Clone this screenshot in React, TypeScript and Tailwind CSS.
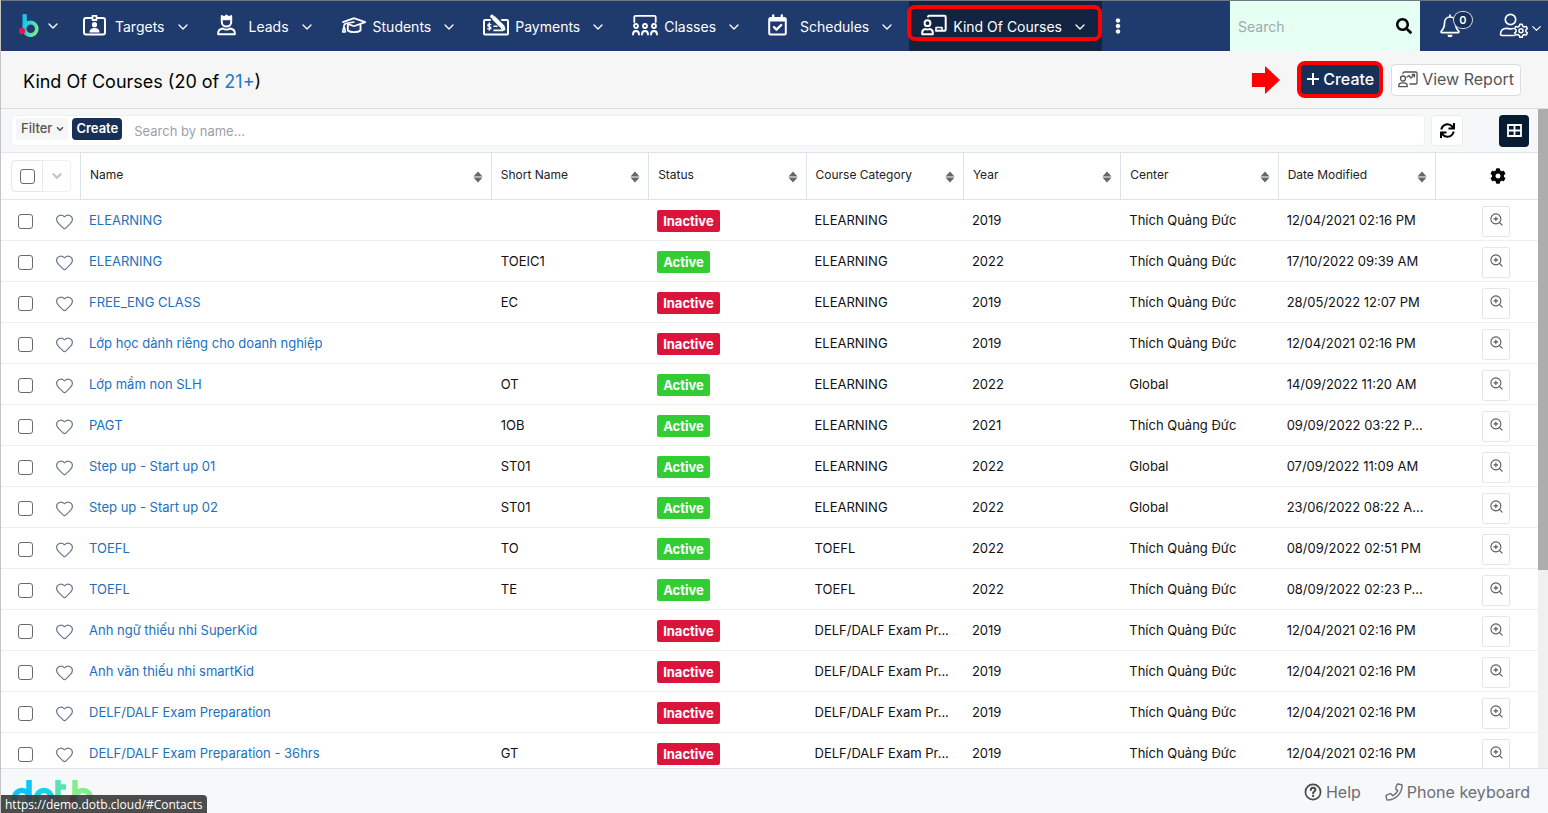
import React from "react";
import { ChevronDown, Heart, ZoomIn } from "lucide-react";
import { FaCog, FaEllipsisV, FaSearch, FaSync } from "react-icons/fa";

type Course = {
  name: string;
  short: string;
  active: boolean;
  category: string;
  year: string;
  center: string;
  modified: string;
};

const TQD = "Thích Quảng Đức";

const courses: Course[] = [
  { name: "ELEARNING", short: "", active: false, category: "ELEARNING", year: "2019", center: TQD, modified: "12/04/2021 02:16 PM" },
  { name: "ELEARNING", short: "TOEIC1", active: true, category: "ELEARNING", year: "2022", center: TQD, modified: "17/10/2022 09:39 AM" },
  { name: "FREE_ENG CLASS", short: "EC", active: false, category: "ELEARNING", year: "2019", center: TQD, modified: "28/05/2022 12:07 PM" },
  { name: "Lớp học dành riêng cho doanh nghiệp", short: "", active: false, category: "ELEARNING", year: "2019", center: TQD, modified: "12/04/2021 02:16 PM" },
  { name: "Lớp mầm non SLH", short: "OT", active: true, category: "ELEARNING", year: "2022", center: "Global", modified: "14/09/2022 11:20 AM" },
  { name: "PAGT", short: "1OB", active: true, category: "ELEARNING", year: "2021", center: TQD, modified: "09/09/2022 03:22 P..." },
  { name: "Step up - Start up 01", short: "ST01", active: true, category: "ELEARNING", year: "2022", center: "Global", modified: "07/09/2022 11:09 AM" },
  { name: "Step up - Start up 02", short: "ST01", active: true, category: "ELEARNING", year: "2022", center: "Global", modified: "23/06/2022 08:22 A..." },
  { name: "TOEFL", short: "TO", active: true, category: "TOEFL", year: "2022", center: TQD, modified: "08/09/2022 02:51 PM" },
  { name: "TOEFL", short: "TE", active: true, category: "TOEFL", year: "2022", center: TQD, modified: "08/09/2022 02:23 P..." },
  { name: "Anh ngữ thiếu nhi SuperKid", short: "", active: false, category: "DELF/DALF Exam Pr...", year: "2019", center: TQD, modified: "12/04/2021 02:16 PM" },
  { name: "Anh văn thiếu nhi smartKid", short: "", active: false, category: "DELF/DALF Exam Pr...", year: "2019", center: TQD, modified: "12/04/2021 02:16 PM" },
  { name: "DELF/DALF Exam Preparation", short: "", active: false, category: "DELF/DALF Exam Pr...", year: "2019", center: TQD, modified: "12/04/2021 02:16 PM" },
  { name: "DELF/DALF Exam Preparation - 36hrs", short: "GT", active: false, category: "DELF/DALF Exam Pr...", year: "2019", center: TQD, modified: "12/04/2021 02:16 PM" },
];

const columns = ["Name", "Short Name", "Status", "Course Category", "Year", "Center", "Date Modified"];

function NavIcon({ children }: { children: React.ReactNode }) {
  return (
    <svg
      viewBox="0 0 26 22"
      className="h-[22px] w-[26px] shrink-0"
      fill="none"
      stroke="white"
      strokeWidth="2"
      strokeLinecap="round"
      strokeLinejoin="round"
      aria-hidden="true"
    >
      {children}
    </svg>
  );
}

const TargetsIcon = (
  <NavIcon>
    <path d="M8.5 4H3a2 2 0 0 0-2 2v12.500a2 2 0 0 0 2 2h17a2 2 0 0 0 2-2V6a2 2 0 0 0-2-2h-5.500" />
    <path d="M9.500 1.800h4v4.200h-4z" strokeWidth="1.800" />
    <circle cx="11.500" cy="10.700" r="2.600" fill="white" stroke="none" />
    <path d="M6.500 18.500c0-3 1.500-4.500 5-4.500s5 1.500 5 4.500z" fill="white" stroke="none" />
  </NavIcon>
);

const LeadsIcon = (
  <NavIcon>
    <path d="M4.800 2v6c0 2.600 2 4.600 4.700 4.600s4.700-2 4.700-4.600V2L11.800 3.400 9.500 1.500 7.200 3.400z" />
    <path d="M5 2.500h9v3.700H5z" fill="white" stroke="none" />
    <path d="M5.800 14.500C3 15 1.200 16.500 1.200 19v1.300h16.600V19c0-2.500-1.800-4-4.600-4.500-2 1.400-5.400 1.400-7.400 0z" />
  </NavIcon>
);

const StudentsIcon = (
  <NavIcon>
    <path d="M2 8.200 12.500 4.300c.4-.1.700-.1 1 0L24.300 8.200 13.500 12c-.3.100-.6.100-1 0L7 10.200" strokeWidth="1.800" />
    <path d="M6.800 11v5.500c2.500 2.200 10.200 2.200 12.700 0v-5.500" strokeWidth="1.900" />
    <path d="M13 8 5 9.500C3.300 10 2.800 11.500 2.800 13l-1.200 5h2.800l-1-5" strokeWidth="1.500" />
  </NavIcon>
);

const PaymentsIcon = (
  <NavIcon>
    <path d="M7 6H2a1 1 0 0 0-1 1v12.500a1 1 0 0 0 1 1h22a1 1 0 0 0 1-1V7a1 1 0 0 0-1-1h-5" />
    <path d="m10.200 3.400 9.800 9.800" strokeWidth="4.200" strokeLinecap="butt" />
    <path d="m18.500 15 3.600 1-1-3.600z" fill="white" strokeWidth="1" />
    <circle cx="9" cy="2.400" r="1.800" fill="white" stroke="none" />
    <path d="M7.800 10.600c-.6-.6-3-.7-3 .8 0 1.600 3.200.9 3.200 2.600 0 1.500-2.600 1.400-3.400.6M6.300 8.800v7.400" strokeWidth="1.300" />
    <path d="M11 12.200h3M11 16.400h9" strokeWidth="1.600" />
  </NavIcon>
);

const ClassesIcon = (
  <NavIcon>
    <path d="M2.300 8V3a1.200 1.200 0 0 1 1.200-1.200h19A1.200 1.200 0 0 1 23.700 3v5" strokeWidth="1.800" />
    <circle cx="4" cy="12" r="2" strokeWidth="1.800" />
    <circle cx="13" cy="12" r="2" strokeWidth="1.800" />
    <circle cx="22" cy="12" r="2" strokeWidth="1.800" />
    <path d="M1 20.500c0-2.200 1-3.500 3-3.500s3 1.300 3 3.500M10 20.500c0-2.200 1-3.500 3-3.500s3 1.300 3 3.500M19 20.500c0-2.200 1-3.500 3-3.500s3 1.300 3 3.500" strokeWidth="1.900" />
  </NavIcon>
);

const SchedulesIcon = (
  <NavIcon>
    <rect x="1.200" y="4" width="16.600" height="16.600" rx="1.500" />
    <path d="M1 4.500h17v3H1z" fill="white" stroke="none" />
    <path d="M5.200 1.500v3M13.800 1.500v3" strokeWidth="2.400" />
    <path d="m6 13.200 2.500 2.500 4.700-4.700" strokeWidth="2.400" />
  </NavIcon>
);

const CoursesIcon = (
  <NavIcon>
    <path d="M7 2.600A1.200 1.200 0 0 1 8 1.800h15.500A1.200 1.200 0 0 1 24.700 3v12.600a1.200 1.200 0 0 1-1.200 1.200H15" />
    <path d="M15 16v-2.500h6V16" strokeWidth="1.600" />
    <circle cx="6.500" cy="9.200" r="2.900" />
    <path d="M4.500 15c-2.200.4-3.300 1.500-3.300 3.500v1.700h10.600v-1.700c0-2-1.100-3.100-3.300-3.500-1 .6-3 .6-4 0z" />
  </NavIcon>
);

const modules = [
  { label: "Targets", icon: TargetsIcon },
  { label: "Leads", icon: LeadsIcon },
  { label: "Students", icon: StudentsIcon },
  { label: "Payments", icon: PaymentsIcon },
  { label: "Classes", icon: ClassesIcon },
  { label: "Schedules", icon: SchedulesIcon },
  { label: "Kind Of Courses", icon: CoursesIcon, active: true },
];

function BrandMark() {
  return (
    <svg viewBox="0 0 22 26" className="h-[26px] w-[22px]" aria-hidden="true">
      <defs>
        <linearGradient id="mark" x1="0" y1="0" x2="1" y2="0.6">
          <stop offset="0" stopColor="#12b9f5" />
          <stop offset="0.45" stopColor="#2fd0d8" />
          <stop offset="1" stopColor="#7bea8a" />
        </linearGradient>
      </defs>
      <path
        d="M4.500 1h3.300a1 1 0 0 1 1 1v6.200A8.300 8.300 0 1 1 4.500 18.500zM12.700 11.500a4.300 4.300 0 1 0 0 8.600 4.300 4.300 0 0 0 0-8.600z"
        fill="url(#mark)"
        fillRule="evenodd"
      />
      <circle cx="4" cy="18" r="3.200" fill="#d81e50" />
    </svg>
  );
}

function FooterLogo() {
  return (
    <svg viewBox="0 0 82 34" className="h-[34px] w-[82px]" fill="none" strokeWidth="5.500" role="img" aria-label="dotb">
      <circle cx="10" cy="18" r="7.500" stroke="#12c3fa" />
      <path d="M17 0v28" stroke="#12c3fa" />
      <circle cx="32" cy="18" r="7.500" stroke="#22cdea" />
      <path d="M46 0v19c0 5 3 8 7 8M46 7h8" stroke="#58e2b4" />
      <path d="M63 0v24" stroke="#84ee8c" />
      <circle cx="71" cy="18" r="7.500" stroke="#84ee8c" />
      <circle cx="61" cy="19" r="3.500" fill="#d81e50" />
    </svg>
  );
}

function SortIcon() {
  return (
    <svg viewBox="0 0 10 12" className="h-3 w-[10px] shrink-0" fill="#666" aria-hidden="true">
      <path d="M5 .5 9.500 5.500h-9zM5 11.500.5 6.500h9z" />
    </svg>
  );
}

function CheckBox({ label }: { label: string }) {
  return (
    <input
      type="checkbox"
      aria-label={label}
      className="block size-[15px] shrink-0 appearance-none rounded-[3px] border border-[#6b6b6b] bg-white checked:bg-[#1b70c0]"
    />
  );
}

function Header() {
  return (
    <header className="flex h-[51px] shrink-0 border-t border-[#6f7785] bg-[#1f3a6c] text-white">
      <button className="flex shrink-0 items-center gap-[5px] pr-[10px] pl-[17px]" aria-label="Home">
        <BrandMark />
        <ChevronDown className="size-4" strokeWidth={2} />
      </button>
      <nav className="flex min-w-0 grow">
        {modules.map((m) => (
          <div key={m.label} className={m.active ? "relative flex bg-[#132443]" : "relative flex"}>
            <a href={"#" + m.label.replace(/ /g, "")} className="flex items-center gap-[6px] pb-[2px] pl-3 text-sm whitespace-nowrap">
              {m.icon}
              <span className="pt-1">{m.label}</span>
            </a>
            <button className="flex items-center pt-[2px] pr-[14px] pl-[10px]" aria-label={m.label + " menu"}>
              <ChevronDown className="size-4" strokeWidth={2} />
            </button>
            {m.active && (
              <span className="pointer-events-none absolute top-1 right-0 -left-[2px] h-9 rounded-lg border-4 border-[#fe0000]" />
            )}
          </div>
        ))}
        <button className="flex items-center px-2" aria-label="More modules">
          <FaEllipsisV className="size-4" />
        </button>
      </nav>
      <label className="flex w-[190px] shrink-0 items-center bg-[#e6fff3] pr-2 pl-2">
        <input
          type="text"
          aria-label="Search"
          placeholder="Search"
          className="min-w-0 grow bg-transparent pt-[2px] text-sm text-black outline-none placeholder:text-[#a0aaae]"
        />
        <FaSearch className="size-4 shrink-0 text-black" />
      </label>
      <div className="flex w-32 shrink-0 items-center justify-between pr-1 pl-5">
        <button className="relative flex h-8 w-9 items-center" aria-label="Notifications">
          <svg viewBox="0 0 20 24" className="h-6 w-5" fill="none" stroke="white" strokeWidth="1.700" strokeLinecap="round" strokeLinejoin="round" aria-hidden="true">
            <path d="M10 1v2M10 3C6.500 3 4.500 5.500 4.500 9c0 5-1.500 6.500-3.200 8.200-.5.600-.2 1.500.6 1.500h16.200c.8 0 1.100-.9.600-1.500C17 15.500 15.500 14 15.500 9c0-3.500-2-6-5.500-6z" />
            <path d="M7.500 20.800h5a2.500 2.500 0 0 1-5 0z" fill="white" stroke="none" />
          </svg>
          <span className="absolute top-[1px] left-[13px] flex h-[18px] w-5 items-center justify-center rounded-[9px] border border-white/80 bg-[#182f57] text-[11px] font-semibold">
            0
          </span>
        </button>
        <button className="flex items-center" aria-label="Account">
          <svg viewBox="0 0 30 26" className="h-[26px] w-[30px]" fill="none" stroke="white" strokeWidth="1.700" strokeLinecap="round" strokeLinejoin="round" aria-hidden="true">
            <circle cx="11.500" cy="6.500" r="5.200" />
            <path d="M15 22.500H3A1.500 1.500 0 0 1 1.500 21C1.500 17.500 4 15.300 7.500 15.300c1.500 0 2.500.6 4 .6 1 0 1.800-.2 2.600-.4" />
            <path d="m20.800 11.200 2.400 0 .5 2 1.500.8 2-.6 1.200 2.100-1.500 1.400v1.700l1.500 1.400-1.200 2.100-2-.6-1.500.8-.5 2h-2.400l-.5-2-1.500-.8-2 .6-1.200-2.100 1.500-1.400v-1.700l-1.500-1.400 1.200-2.100 2 .6 1.500-.8z" strokeWidth="1.500" />
            <circle cx="22" cy="17.700" r="2" strokeWidth="1.500" />
          </svg>
          <ChevronDown className="mt-1 size-[15px]" strokeWidth={2} />
        </button>
      </div>
    </header>
  );
}

function TitleBar() {
  return (
    <div className="flex h-[58px] shrink-0 items-center justify-between border-b border-[#dedede] bg-[#f6f6f6] pr-[27px] pl-[22px]">
      <h1 className="pt-1 text-lg text-black">
        Kind Of Courses (20 of <a href="#more" className="text-[#1b78cf]">21+</a>)
      </h1>
      <div className="flex items-center">
        <svg viewBox="0 0 28 28" className="mr-[17px] size-7" fill="#fe0000" aria-hidden="true">
          <path d="M0 7h13V0l15 14-15 14v-7H0z" />
        </svg>
        <button className="mr-2 flex h-[37px] items-center gap-[3px] rounded-lg border-4 border-[#fe0000] bg-[#182f57] px-[5px] pb-[1px] text-base font-medium text-white">
          <svg viewBox="0 0 14 14" className="size-[14px]" stroke="white" strokeWidth="2" aria-hidden="true">
            <path d="M7 1v12M1 7h12" />
          </svg>
          Create
        </button>
        <button className="flex h-8 items-center gap-1 rounded-sm border border-[#dcdcdc] bg-white px-[6px] pb-[1px] text-base text-[#555]">
          <svg viewBox="0 0 20 17" className="h-[17px] w-5" fill="none" stroke="#555" strokeWidth="1.300" strokeLinecap="round" strokeLinejoin="round" aria-hidden="true">
            <path d="M5 2.500C5 1.500 5.500 1 6.500 1h11.200c.8 0 1.300.5 1.300 1.300v9.400c0 .8-.5 1.300-1.300 1.300H12" />
            <circle cx="5" cy="7.500" r="2.500" />
            <path d="M3.500 11.800C1.700 12.100.8 13 .8 14.500v1.200h8.400v-1.200c0-1.500-.9-2.400-2.700-2.700z" />
            <path d="m9 6 2-1.500L13 7l3.500-3.500M14.200 3.500h2.300v2.300" />
          </svg>
          View Report
        </button>
      </div>
    </div>
  );
}

function FilterBar() {
  return (
    <div className="flex h-[43px] shrink-0 items-center bg-[#f6f7f9] pr-[9px] pl-[10px]">
      <div className="flex h-[31px] min-w-0 grow items-center rounded-sm border border-[#f0f0f0] bg-white pl-1">
        <div className="flex shrink-0 gap-1 pr-1 pb-[3px]">
          <button className="flex h-[22px] items-center gap-[3px] rounded bg-[#f6f6f6] pr-[3px] pl-[5px] text-[13px] font-medium text-[#555]">
            Filter
            <ChevronDown className="size-[10px]" strokeWidth={4} />
          </button>
          <button className="flex h-[22px] items-center rounded bg-[#182f57] px-1 text-[13px] font-semibold text-white">
            Create
          </button>
        </div>
        <input
          type="text"
          aria-label="Search by name"
          placeholder="Search by name..."
          className="min-w-0 grow bg-transparent px-2 pt-[2px] text-[13px] outline-none placeholder:text-[#9a9fa5]"
        />
      </div>
      <button className="ml-[6px] flex h-[31px] w-8 shrink-0 items-center justify-center rounded-sm border border-[#ececec] bg-white text-black" aria-label="Refresh">
        <FaSync className="size-[15px]" />
      </button>
      <button className="ml-9 flex h-8 w-[30px] shrink-0 items-center justify-center rounded bg-[#061c33]" aria-label="Grid view">
        <svg viewBox="0 0 15 13" className="h-[13px] w-[15px]" fill="none" stroke="white" strokeWidth="1.800" aria-hidden="true">
          <path d="M1 1h13v11H1zM7.500 1v11M1 6.500h13" />
        </svg>
      </button>
    </div>
  );
}

function CourseTable() {
  return (
    <div className="min-h-0 grow overflow-hidden bg-white">
      <table className="w-full table-fixed border-separate border-spacing-0 text-left">
        <colgroup>
          <col className="w-[79px]" />
          <col />
          {columns.slice(1).map((c) => (
            <col key={c} className="w-[10.24%]" />
          ))}
          <col className="w-[103px]" />
        </colgroup>
        <thead>
          <tr className="h-12">
            <th className="border-y border-[#e3e6ea] p-0 pl-[10px]">
              <div className="flex h-8">
                <span className="flex w-8 items-center justify-center rounded-l-sm border border-[#e8e8e8]">
                  <CheckBox label="Select all" />
                </span>
                <button className="flex w-7 items-center justify-center rounded-r-sm border border-l-0 border-[#f0f0f0]" aria-label="Selection menu">
                  <ChevronDown className="size-[14px] text-[#c4c4c4]" strokeWidth={4} />
                </button>
              </div>
            </th>
            {columns.map((c) => (
              <th key={c} className="border-y border-l border-[#dde2e8] p-0 pr-2 pl-[9px] text-xs font-normal text-[#222]">
                <div className="flex items-center justify-between pt-[1px]">
                  <span className="pb-[3px]">{c}</span>
                  <SortIcon />
                </div>
              </th>
            ))}
            <th className="border-y border-l border-[#dde2e8] p-0 pl-[21px]">
              <button className="mx-auto block" aria-label="Column settings">
                <FaCog className="size-4 text-black" />
              </button>
            </th>
          </tr>
        </thead>
        <tbody className="text-[13px] text-[#111]">
          {courses.map((c, i) => (
            <tr key={i} className="h-[41px] [&>td]:border-b [&>td]:border-[#eeeff1] [&>td]:p-0 [&>td]:pt-[2px] [&>td]:whitespace-nowrap">
              <td>
                <div className="flex items-center gap-[22px] pl-[17px]">
                  <CheckBox label={"Select " + c.name} />
                  <button aria-label={"Favorite " + c.name}>
                    <Heart className="size-[19px] text-[#66768a]" strokeWidth={1.500} />
                  </button>
                </div>
              </td>
              <td>
                <a href="#record" className="pl-[9px] text-[#1b70c0]">{c.name}</a>
              </td>
              <td>
                <span className="pl-[10px]">{c.short}</span>
              </td>
              <td>
                <span
                  className={
                    c.active
                      ? "ml-[9px] inline-block rounded-xs bg-[#32cd32] px-[6px] text-[13px] leading-[22px] font-bold text-white"
                      : "ml-[9px] inline-block rounded-xs bg-[#dc143c] px-[6px] text-[13px] leading-[22px] font-bold text-white"
                  }
                >
                  {c.active ? "Active" : "Inactive"}
                </span>
              </td>
              <td>
                <span className="pl-[9px]">{c.category}</span>
              </td>
              <td>
                <span className="pl-[9px]">{c.year}</span>
              </td>
              <td>
                <span className="pl-[9px]">{c.center}</span>
              </td>
              <td>
                <span className="pl-[9px]">{c.modified}</span>
              </td>
              <td>
                <button className="ml-[47px] flex h-[31px] w-7 items-center justify-center rounded-xs border border-[#e6e6e6] bg-white pb-[3px]" aria-label={"Preview " + c.name}>
                  <ZoomIn className="size-[15px] text-[#555]" strokeWidth={1.700} />
                </button>
              </td>
            </tr>
          ))}
        </tbody>
      </table>
    </div>
  );
}

function Footer() {
  return (
    <footer className="relative flex h-[45px] shrink-0 items-center justify-between overflow-hidden border-t border-[#e2e4e6] bg-[#f7f8fa] pr-[18px] pl-[11px]">
      <div className="self-start pt-[11px]">
        <FooterLogo />
      </div>
      <div className="flex items-center gap-6 pt-[2px] text-base text-[#6a6f73]">
        <a href="#help" className="flex items-center gap-1">
          <svg viewBox="0 0 18 18" className="size-[18px]" fill="none" stroke="#4a4a4a" strokeWidth="1.700" strokeLinecap="round" aria-hidden="true">
            <circle cx="9" cy="9" r="7.600" />
            <path d="M6.800 7c.1-1.400 1-2.200 2.300-2.200s2.300.8 2.300 2c0 1.700-2.300 1.700-2.300 3.400" strokeWidth="2" />
            <circle cx="9.100" cy="13" r="0.500" strokeWidth="1.300" />
          </svg>
          Help
        </a>
        <a href="#phone" className="flex items-center gap-1">
          <svg viewBox="0 0 18 18" className="size-[18px]" fill="none" stroke="#6a6f73" strokeWidth="1.400" strokeLinejoin="round" aria-hidden="true">
            <path d="m13 1 3.500.8c.4.100.6.400.6.800C17 10.500 10.500 17 2.600 17.100c-.4 0-.7-.2-.8-.6L1 13.200c-.1-.4.1-.8.500-1l3.600-1.500c.3-.2.700-.1 1 .2l1.500 1.900c2.300-1.100 4.100-2.900 5.200-5.200l-1.900-1.500c-.3-.3-.4-.7-.2-1L12.100 1.500c.200-.4.500-.6.900-.5z" />
          </svg>
          Phone keyboard
        </a>
      </div>
      <span className="absolute bottom-0 left-0 rounded-tr-sm bg-[#383838]/90 px-1 pt-[1px] font-['Open_Sans',sans-serif] text-xs leading-[17px] text-white">
        https://demo.dotb.cloud/#Contacts
      </span>
    </footer>
  );
}

export default function App() {
  return (
    <div className="flex h-screen flex-col overflow-hidden border-l border-[#c4c4c4] bg-white font-['Inter',sans-serif]">
      <Header />
      <TitleBar />
      <div className="flex min-h-0 grow">
        <main className="flex min-w-0 grow flex-col">
          <FilterBar />
          <CourseTable />
        </main>
        <div className="w-[10px] shrink-0 bg-[#f0f0f0]" aria-hidden="true">
          <div className="h-[70%] bg-[#adadad]" />
        </div>
      </div>
      <Footer />
    </div>
  );
}
